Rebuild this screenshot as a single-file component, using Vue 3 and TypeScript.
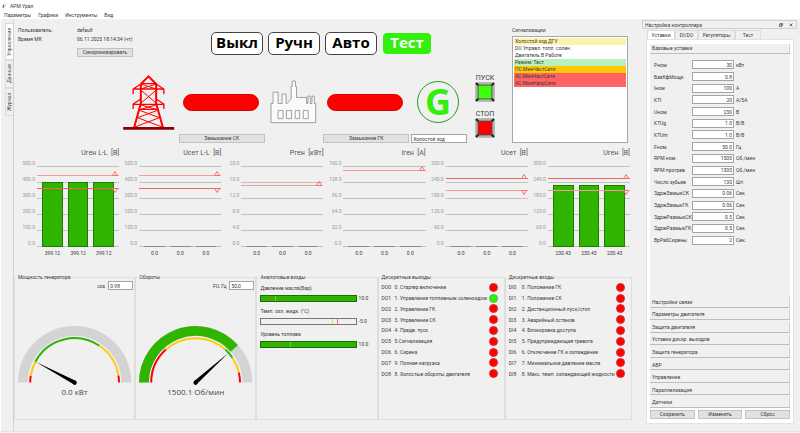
<script setup lang="ts">
interface Limit { value: number; dir: 'up' | 'down'; soft: boolean }
interface Chart { title: string; max: number; digits: number[]; limits: Limit[]; values: number[]; precision: number }
interface Segment { from: number; to: number; color: string }
interface Gauge {
  title: string; label: string; id: string; field: string; text: string
  fill: number | null; needle: number; segments: Segment[]
}

const menus = ['Параметры', 'Графики', 'Инструменты', 'Вид']
const sideTabs = ['Управление', 'Данные', 'Журнал']
const modes = ['Выкл', 'Ручн', 'Авто', 'Тест']

const alarms = [
  { text: 'Холостой ход ДГУ', kind: 'notice' },
  { text: 'DO Управл. топл. солен.', kind: 'plain' },
  { text: 'Двигатель В Работе', kind: 'plain' },
  { text: 'Режим: Тест', kind: 'ok' },
  { text: 'ПС:МинЧастСети', kind: 'warn' },
  { text: 'АС:МинЧастСети', kind: 'fault' },
  { text: 'АС:МинНапрСети', kind: 'fault' },
]

const steps = (max: number): number[] => [5, 4, 3, 2, 1, 0].map(i => (max / 5) * i)
const make = (title: string, max: number, values: number[], precision: number, limits: Limit[]): Chart =>
  ({ title, max, digits: steps(max), values, precision, limits })
const lineLimits: Limit[] = [
  { value: 438, dir: 'up', soft: true },
  { value: 357, dir: 'down', soft: false },
]
const phaseLimits: Limit[] = [
  { value: 253, dir: 'up', soft: false },
  { value: 206, dir: 'down', soft: true },
]
const charts: Chart[] = [
  make('Uген L-L\u00a0 [В]', 500, [399.12, 399.12, 399.12], 2, lineLimits),
  make('Uсет L-L\u00a0 [В]', 500, [0, 0, 0], 1, lineLimits),
  make('Pген\u00a0 [кВт]', 20, [0, 0, 0], 1, [{ value: 15, dir: 'up', soft: true }]),
  make('Iген\u00a0 [А]', 160, [0, 0, 0], 1, [{ value: 150, dir: 'up', soft: true }]),
  make('Uсет\u00a0 [В]', 300, [0, 0, 0], 1, phaseLimits),
  make('Uген\u00a0 [В]', 300, [230.43, 230.43, 230.43], 2, phaseLimits),
]
const percent = (v: number, max: number): string => `${(v / max) * 100}%`

const red = '#f80008'
const yellow = '#ffc90e'
const green = '#2fb400'
const gauges: Gauge[] = [
  {
    title: 'Мощность генератора', label: 'cos', id: 'cos', field: '0.98', text: '0.0 кВт', fill: null, needle: 152,
    segments: [
      { from: 180, to: 171, color: red }, { from: 171, to: 152, color: yellow },
      { from: 152, to: 56, color: green }, { from: 56, to: 9, color: yellow }, { from: 9, to: 0, color: red },
    ],
  },
  {
    title: 'Обороты', label: 'FU, Гц', id: 'freq', field: '50,0', text: '1500.1 Об/мин', fill: 41.5, needle: 42,
    segments: [
      { from: 180, to: 132, color: red }, { from: 132, to: 48, color: yellow },
      { from: 48, to: 34, color: green }, { from: 34, to: 13, color: yellow }, { from: 13, to: 0, color: red },
    ],
  },
]
const point = (r: number, deg: number): string => {
  const a = (deg * Math.PI) / 180
  return `${(60 + r * Math.cos(a)).toFixed(2)} ${(58 - r * Math.sin(a)).toFixed(2)}`
}
const arc = (r: number, from: number, to: number): string => `M${point(r, from)}A${r} ${r} 0 0 1 ${point(r, to)}`

const analogs = [
  { name: 'Давление масла(Бар)', value: '10.0', full: true, marks: [{ at: 10, color: '#c86414' }, { at: 14, color: '#96c800' }] },
  { name: 'Темп. охл. жидк. (°C)', value: '-5.0', full: false, marks: [{ at: 75, color: '#ffd24a' }, { at: 80, color: '#ff7060' }] },
  { name: 'Уровень топлива', value: '10.0', full: true, marks: [{ at: 20, color: '#b4640a' }, { at: 30, color: '#96c800' }] },
]

const discrete = [
  {
    title: 'Дискретные выходы', prefix: 'DO', on: [1],
    rows: ['0. Стартер включение', '1. Управление топливным соленоидом', '2. Управление ГК', '3. Управление СК', '4. Предв. пуск', '5.Сигнализация', '6. Сирена', '9. Полная нагрузка', '8. Холостые обороты двигателя'],
  },
  {
    title: 'Дискретные входы', prefix: 'DI', on: [] as number[],
    rows: ['0. Положение ГК', '1. Положение СК', '2. Дистанционный пуск/стоп', '3. Аварийный останов', '4. Блокировка доступа', '5. Предупреждающая тревога', '6. Отключение ГК и охлаждение', '7. Минимальное давление масла', '8. Макс. темп. охлаждающей жидкости'],
  },
]

const dockTabs = ['Уставки', 'DI/DO', 'Регуляторы', 'Тест']
const settings: [string, string, string][] = [
  ['Рном', '30', 'кВт'], ['БазКфМощи', '0.8', ''], ['Iном', '100', 'А'], ['KTI', '20', 'А/5А'],
  ['Uном', '230', 'В'], ['KTUg', '1.0', 'В/В'], ['KTUm', '1.0', 'В/В'], ['Fном.', '50.0', 'Гц'],
  ['RPM ном.', '1500', 'Об./мин'], ['RPM прогрев', '1300', 'Об./мин'], ['Число зубьев', '130', 'Шт.'],
  ['ЗдржЗамыкСК', '0.06', 'Сек.'], ['ЗдржЗамыкГК', '0.06', 'Сек.'], ['ЗдржРазмыкСК', '0.5', 'Сек.'],
  ['ЗдржРазмыкГК', '0.5', 'Сек.'], ['ВрРабСирены', '2', 'Сек.'],
]
const sections = ['Настройки связи', 'Параметры двигателя', 'Защита двигателя', 'Уставки дискр. выходов', 'Защита генератора', 'АВР', 'Управление', 'Параллелизация', 'Датчики']
const actions = ['Сохранить', 'Изменить', 'Сброс']
</script>

<template>
  <div class="window">
    <header class="titlebar">
      <svg class="logo" viewBox="0 0 16 14"><path d="M0 13 7 0v13z" fill="#1d8a72" /><path d="M9 13 14 1" stroke="#a9c9c2" stroke-width="2" /></svg>
      <span>АРМ Урал</span>
    </header>
    <nav class="menubar">
      <button v-for="m in menus" :key="m" type="button">{{ m }}</button>
    </nav>

    <div class="workspace">
      <nav class="side-tabs">
        <button v-for="(t, i) in sideTabs" :key="t" type="button" :class="{ active: i === 0 }">{{ t }}</button>
      </nav>

      <main class="page">
        <section class="top">
          <div class="control">
            <div class="head">
              <dl class="info">
                <dt>Пользователь:</dt><dd>default</dd>
                <dt>Время МК</dt><dd>06.11.2025 18:14:34 (чт)</dd>
                <dt></dt><dd><button type="button" class="btn sync">Синхронизировать</button></dd>
              </dl>
              <div class="modes">
                <button v-for="m in modes" :key="m" type="button" class="mode" :class="{ on: m === 'Тест' }">{{ m }}</button>
              </div>
            </div>

            <div class="scheme-row">
              <div class="scheme">
                <svg class="tower" viewBox="366 222 158 171" fill="none" stroke="#f00" stroke-width="4">
                  <path d="M422 252 445 229 468 252V310L488 382M422 252V310L402 382" stroke-width="6" />
                  <path d="M422 251H468M422 252 399 267V283M468 252 491 267V283M399 267H491M422 297 399 312V327M468 297 491 312V327M399 313H491M418 328H472" />
                  <path d="M422 252 468 267M468 252 422 267M424 272 466 308M466 272 424 308M420 314 468 328M470 314 422 328M418 331 478 353M472 331 412 353M412 353 486 381M478 353 404 381" stroke-width="3" />
                  <path d="M369 385H522" stroke="#8e0000" stroke-width="8" />
                </svg>
                <div class="bus"></div>
                <svg class="factory" viewBox="211 181 140 131" fill="#fafafa" stroke="#777" stroke-width="2">
                  <path d="M214 308V251H220V217H235V251H247V223H259V251H262L274 238V200H277V184H287V200H290V233H320V251H324V229H331V251H336V229H343V251H347V308Z" />
                  <path d="M235 272h15v24h-15zM260 272h15v24h-15zM286 272h13v24h-13zM310 272h15v24h-15z" />
                </svg>
                <div class="bus"></div>
                <div class="generator">G</div>
                <button type="button" class="btn col-2">Замыкание СК</button>
                <button type="button" class="btn col-4">Замыкание ГК</button>
                <input class="field state" value="Холостой ход" aria-label="Состояние">
              </div>
              <div class="run">
                <label for="start">ПУСК</label>
                <button id="start" type="button" class="push">
                  <svg viewBox="0 0 20 20"><path d="M1 1h18v18H1z" fill="#ddd" stroke="#888" /><path d="M1 1 19 19M19 1 1 19" stroke="#222" stroke-width="2" /><path d="M3 3h14v14H3z" fill="#3cff0a" stroke="#444" /></svg>
                </button>
                <label for="stop">СТОП</label>
                <button id="stop" type="button" class="push">
                  <svg viewBox="0 0 20 20"><path d="M1 1h18v18H1z" fill="#ddd" stroke="#888" /><path d="M1 1 19 19M19 1 1 19" stroke="#222" stroke-width="2" /><path d="M3 3h14v14H3z" fill="#f00" stroke="#444" /></svg>
                </button>
              </div>
            </div>
          </div>

          <div class="alarms">
            <span>Сигнализации</span>
            <ul><li v-for="a in alarms" :key="a.text" :class="a.kind">{{ a.text }}</li></ul>
          </div>
        </section>

        <section class="charts">
          <article v-for="(c, ci) in charts" :key="ci" class="chart">
            <h3>{{ c.title }}</h3>
            <div class="scale"><span v-for="d in c.digits" :key="d">{{ d.toFixed(1) }}</span></div>
            <div class="plot">
              <div class="lines"><i v-for="d in c.digits" :key="d"></i></div>
              <div class="bars">
                <div v-for="(v, i) in c.values" :key="i" class="bar" :class="{ empty: v === 0 }" :style="{ height: percent(v, c.max) }"></div>
              </div>
              <div v-for="l in c.limits" :key="l.value" class="limit" :class="[l.dir, { soft: l.soft }]" :style="{ bottom: percent(l.value, c.max) }">
                <svg viewBox="0 0 6 5"><path d="M.5 4.5h5L3 .5z" /></svg>
              </div>
            </div>
            <div class="values"><span v-for="(v, i) in c.values" :key="i">{{ v.toFixed(c.precision) }}</span></div>
          </article>
        </section>

        <section class="panels">
          <fieldset v-for="g in gauges" :key="g.id">
            <legend>{{ g.title }}</legend>
            <div class="gauge-field">
              <label :for="g.id">{{ g.label }}</label>
              <input :id="g.id" class="field" :value="g.field">
            </div>
            <svg class="gauge" viewBox="1 0 118 59">
              <path :d="arc(52, 180, 0)" stroke="#d4d4d4" stroke-width="10" fill="none" />
              <path v-if="g.fill !== null" :d="arc(52, 180, g.fill)" :stroke="green" stroke-width="10" fill="none" />
              <path v-for="(s, i) in g.segments" :key="i" :d="arc(44.7, s.from, s.to)" :stroke="s.color" stroke-width="2" fill="none" />
              <g :transform="`rotate(${-g.needle} 60 58)`"><path d="M60 56 104 58 60 60z" /><circle cx="60" cy="58" r="2.2" /></g>
            </svg>
            <output class="reading">{{ g.text }}</output>
          </fieldset>

          <fieldset>
            <legend>Аналоговые входы</legend>
            <div v-for="a in analogs" :key="a.name" class="level">
              <span>{{ a.name }}</span>
              <div class="level-row">
                <div class="track" :class="{ full: a.full }">
                  <i v-for="m in a.marks" :key="m.at" :style="{ left: m.at + '%', background: m.color }"></i>
                </div>
                <span>{{ a.value }}</span>
              </div>
            </div>
          </fieldset>

          <fieldset v-for="d in discrete" :key="d.prefix">
            <legend>{{ d.title }}</legend>
            <ul class="signals">
              <li v-for="(r, i) in d.rows" :key="r">
                <span>{{ d.prefix }}{{ i }}</span><span>{{ r }}</span>
                <i class="lamp" :class="{ lit: d.on.includes(i) }"></i>
              </li>
            </ul>
          </fieldset>
        </section>
      </main>

      <aside class="dock">
        <div class="dock-title">
          <span>Настройка контроллера</span>
          <button type="button" aria-label="Открепить"><svg viewBox="0 0 12 12"><path d="M4 3V1h7v6H8M1 4h7v7H1z" fill="none" stroke="#333" stroke-width="2" /></svg></button>
          <button type="button" aria-label="Закрыть"><svg viewBox="0 0 12 12"><path d="M2 2 10 10M10 2 2 10" stroke="#333" stroke-width="2" /></svg></button>
        </div>
        <div class="dock-tabs">
          <button v-for="(t, i) in dockTabs" :key="t" type="button" :class="{ active: i === 0 }">{{ t }}</button>
        </div>
        <div class="dock-page">
          <div class="toolbox">
            <button type="button" class="section">Базовые уставки</button>
            <form class="settings">
              <div v-for="(s, i) in settings" :key="i" class="setting">
                <label :for="'s' + i">{{ s[0] }}</label>
                <input :id="'s' + i" class="field" :value="s[1]">
                <span>{{ s[2] }}</span>
              </div>
            </form>
            <div class="sections">
              <button v-for="s in sections" :key="s" type="button" class="section">{{ s }}</button>
            </div>
          </div>
          <div class="actions"><button v-for="a in actions" :key="a" type="button" class="btn">{{ a }}</button></div>
        </div>
      </aside>
    </div>
    <footer class="status"></footer>
  </div>
</template>

<style>
body { background: #f0f0f0; }
</style>

<style scoped>
* { box-sizing: border-box; margin: 0; padding: 0; }
.window {
  display: flex; flex-direction: column; min-height: 100vh; background: #f0f0f0;
  color: #383838; font: 5px/8px Roboto, "Noto Sans", sans-serif; white-space: nowrap;
}
button, input { font: inherit; color: inherit; border: 0; background: none; min-width: 0; }
ul { list-style: none; }
svg { display: block; }

.titlebar { display: flex; align-items: center; gap: 3px; height: 11px; padding-left: 2px; background: #fff; }
.logo { width: 5px; height: 5px; }
.menubar { display: flex; gap: 7px; height: 8px; padding-left: 4px; background: #fff; }
.workspace { display: flex; flex: 1; border-left: 1px solid #fff; }

.side-tabs { display: flex; flex-direction: column; width: 13px; padding: 4px 0 0 4px; border-right: 1px solid #d2d2d2; }
.side-tabs button {
  height: 28px; writing-mode: vertical-rl; transform: rotate(180deg);
  border: 1px solid #dcdcdc; border-left: 0; color: #444; line-height: 7px;
}
.side-tabs button.active { height: 37px; background: #fff; }

.page { flex: 1; min-width: 0; display: flex; flex-direction: column; padding-right: 10px; }
.top { display: flex; gap: 12px; padding: 7px 4px 0 4px; height: 127px; }
.control { flex: 1; min-width: 0; }
.head { display: flex; height: 46px; }
.info { display: grid; grid-template-columns: 59px auto; grid-auto-rows: 9px; width: 193px; }
.info dd, .info dt { line-height: 9px; }
.btn { height: 9px; line-height: 7px; background: #e1e1e1; border: 1px solid #c2c2c2; text-align: center; }
.sync { display: block; width: 56px; margin-top: 4px; }
.modes { display: flex; gap: 5px; padding-top: 6px; height: 29px; }
.mode { width: 52px; height: 23px; padding-bottom: 3px; border: 1px solid #444; border-radius: 5px; background: #fff; color: #000; font: 700 15px/18px "Open Sans", sans-serif; }
.mode.on { width: 50px; background: #32f00a; border-color: #f0f0f0; color: #fff; }

.scheme-row { display: flex; gap: 3px; padding-left: 101px; }
.scheme {
  flex: 1; display: grid; grid-template-columns: 60fr 86fr 59fr 86fr 2px 56fr; grid-template-rows: 60px 9px; row-gap: 2px;
  align-items: center; justify-items: center;
}
.tower { width: 53px; height: 57px; }
.factory { width: 47px; height: 44px; }
.bus { justify-self: stretch; margin: 0 6px 0 4px; height: 17px; border: 1px solid #d40000; border-radius: 9px; background: #f00; }
.generator {
  grid-column: 5 / 7; width: 42px; height: 42px; border: 1px solid #2a9a1c; border-radius: 50%;
  color: #32f00a; font: 700 36px/39px "Open Sans", sans-serif; text-align: center;
}
.col-2 { grid-column: 2; justify-self: stretch; }
.col-4 { grid-column: 4; justify-self: stretch; }
.field { height: 9px; padding: 0 1px; border: 1px solid #a4a4a4; background: #fff; line-height: 7px; }
.state { grid-column: 6; justify-self: stretch; width: 100%; }
.run { width: 30px; display: flex; flex-direction: column; align-items: center; font-size: 7px; line-height: 8px; padding-top: 2px; }
.push { width: 20px; height: 20px; margin-bottom: 8px; }

.alarms { width: 116px; display: flex; flex-direction: column; }
.alarms ul { flex: 1; margin: 2px 0 3px; padding: 1px; border: 1px solid #a8a8a8; background: #fff; }
.alarms li { height: 7px; line-height: 7px; padding-left: 1px; }
.alarms .notice { background: #fff2ac; }
.alarms .ok { background: #b9f0bd; }
.alarms .warn { background: #ffc800; }
.alarms .fault { background: #ff6464; }

.charts { display: grid; grid-template-columns: repeat(6, 1fr); padding: 1px 2px 0 3px; height: 127px; }
.chart { display: grid; grid-template-columns: 18px 1fr; grid-template-rows: 12px 90px 10px; column-gap: 2px; align-content: start; }
.chart h3 { grid-column: 1 / 3; text-align: right; font-size: 7px; font-weight: 400; line-height: 12px; color: #555; }
.scale { display: flex; flex-direction: column; justify-content: space-between; text-align: right; color: #999; height: 88px; }
.plot { position: relative; display: grid; height: 81px; margin-top: 7px; }
.plot > .lines, .plot > .bars { grid-area: 1 / 1; min-height: 0; height: 81px; }
.lines { display: flex; flex-direction: column; justify-content: space-between; }
.lines i { height: 1px; background: #c2c2c2; }
.bars { display: flex; align-items: flex-end; gap: 5px; padding: 0 5px; z-index: 1; }
.bar { flex: 1; background: #2fb400; border: 1px solid #1f7d05; }
.bar.empty { border: 0; border-bottom: 1px solid #8c8c8c; min-height: 1px; }
.limit { position: absolute; z-index: 2; left: 0; right: 0; height: 1px; background: #f0645f; }
.limit.soft { background: #f79a98; }
.limit svg { position: absolute; right: 1px; width: 6px; height: 5px; fill: none; stroke: #f0706c; }
.limit.up svg { bottom: 0; }
.limit.down svg { top: 0; transform: scaleY(-1); }
.values { grid-column: 2; display: flex; gap: 5px; padding: 0 5px; text-align: center; }
.values span { flex: 1; }

.panels { display: grid; grid-template-columns: 121fr 121fr 121fr 127fr 127fr; height: 147px; }
fieldset { min-width: 0; border: 1px solid #dedede; padding: 0 1px; }
legend { padding-left: 2px; height: 8px; }
.gauge-field { display: flex; justify-content: flex-end; align-items: center; gap: 3px; }
.gauge-field .field { width: 25px; }
.gauge { width: 100%; margin-top: 35px; overflow: visible; }
.reading { display: block; text-align: center; font: 8px/15px "Open Sans", sans-serif; color: #444; }
.level { height: 23px; padding: 3px 0 0 2px; }
.level > span { display: block; height: 11px; }
.level-row { display: grid; grid-template-columns: 1fr 17px; gap: 2px; line-height: 7px; }
.track { position: relative; height: 7px; border: 1px solid #777; }
.track.full { background: #2fb400; border-color: #1a6e05; }
.track i { position: absolute; top: 0; bottom: 0; width: 1px; }
.signals { display: grid; grid-auto-rows: 1fr; height: 98px; padding: 1px 5px 0 2px; }
.signals li { display: grid; grid-template-columns: 13px 1fr 9px; align-items: center; }
.lamp { width: 9px; height: 9px; border-radius: 50%; background: #f00; border: 1px solid #d83030; }
.lamp.lit { background: #32f00a; border-color: #4cc030; }

.dock { width: 158px; display: flex; flex-direction: column; padding: 1px 3px 0 0; }
.dock-title { display: flex; align-items: center; gap: 6px; height: 9px; padding: 0 3px 0 2px; border: 1px solid #cfcfcf; }
.dock-title span { flex: 1; }
.dock-title svg { width: 4px; height: 4px; }
.dock-tabs { display: flex; align-items: flex-end; height: 10px; padding-left: 5px; }
.dock-tabs button { height: 9px; border: 1px solid #dcdcdc; border-bottom: 0; line-height: 7px; }
.dock-tabs button:nth-child(1) { width: 28px; background: #fff; }
.dock-tabs button:nth-child(2) { width: 23px; }
.dock-tabs button:nth-child(3) { width: 37px; }
.dock-tabs button:nth-child(4) { width: 26px; }
.dock-page { margin: 0 3px 0 4px; border: 1px solid #e2e2e2; background: #fff; padding: 4px 3px; }
.toolbox { background: #f0f0f0; }
.section { display: block; width: 100%; text-align: left; padding-left: 2px; background: #f0f0f0; border-bottom: 1px solid #bdbdbd; border-right: 1px solid #d0d0d0; line-height: 9px; height: 10px; }
.settings { height: 243px; padding: 5px 4px 51px 4px; display: grid; grid-template-rows: repeat(16, 1fr); }
.setting { display: grid; grid-template-columns: 36px 42px 1fr; column-gap: 2px; align-items: center; }
.setting .field { text-align: right; }
.sections { display: grid; grid-auto-rows: 1fr; row-gap: 2px; height: 111px; }
.sections .section { height: auto; line-height: 8px; }
.actions { display: grid; grid-template-columns: repeat(3, 1fr); gap: 3px; padding-top: 2px; }
.status { height: 2px; border-top: 1px solid #e4e4e4; background: #f4f4f4; }
</style>
